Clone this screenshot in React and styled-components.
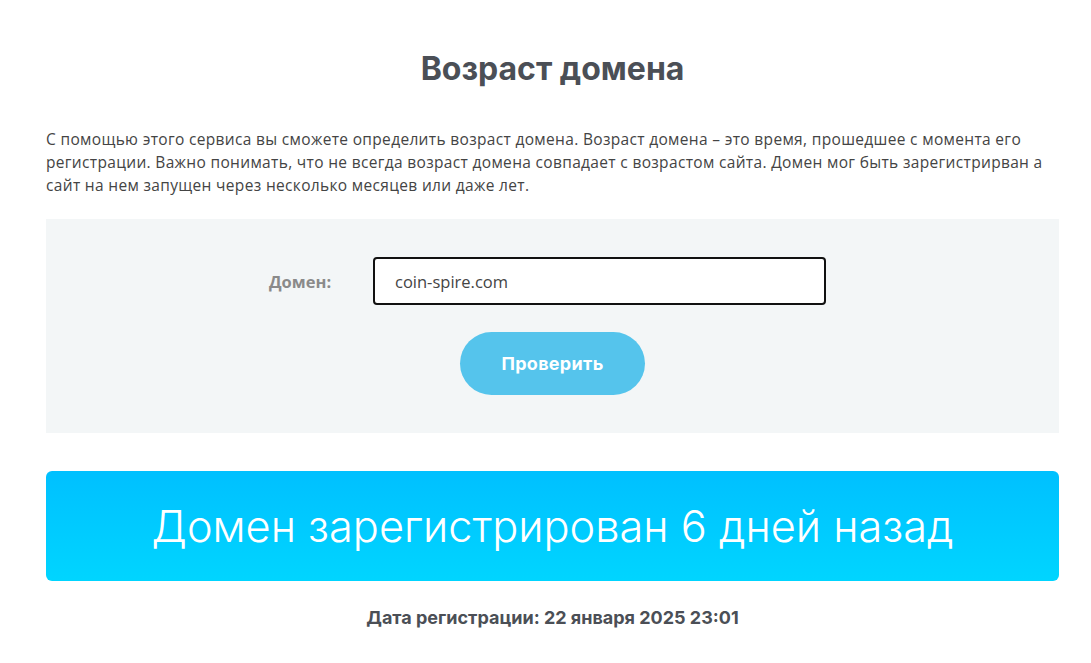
import React from 'react'
import styled, { createGlobalStyle } from 'styled-components'

const GlobalStyle = createGlobalStyle`
  body {
    margin: 0;
    background: #fff;
    font-family: Inter, "Noto Sans", sans-serif;
  }
`;

const Page = styled.div`
  padding: 46px 32px 0 46px;
  color: #4b4f56;
`;

const Title = styled.h1`
  margin: 0;
  text-align: center;
  font-family: Inter, sans-serif;
  font-weight: 700;
  font-size: 32px;
  line-height: 46px;
  color: #4b4f56;
`;

const Intro = styled.p`
  margin: 36px 0 0;
  font-family: "Open Sans", sans-serif;
  font-size: 15.5px;
  letter-spacing: 0.33px;
  line-height: 23px;
  color: #444;
  white-space: nowrap;
`;

const FormBox = styled.div`
  margin-top: 22px;
  background: #f3f6f7;
  height: 214px;
  box-sizing: border-box;
  padding-top: 38px;
  display: flex;
  flex-direction: column;
  align-items: center;
`;

const Row = styled.div`
  display: flex;
  align-items: center;
  gap: 42px;
  margin-right: 10px;
`;

const Label = styled.label`
  font-family: "Open Sans", sans-serif;
  font-weight: 700;
  font-size: 16.5px;
  color: #8a8a8a;
  width: 62px;
  white-space: nowrap;
`;

const Input = styled.input`
  width: 453px;
  height: 48px;
  box-sizing: border-box;
  border: 2px solid #111;
  border-radius: 4px;
  padding: 0 20px;
  font-family: "Open Sans", sans-serif;
  font-size: 16.5px;
  color: #444;
  outline: none;
`;

const Button = styled.button`
  margin-top: 27px;
  width: 185px;
  height: 63px;
  border: none;
  border-radius: 32px;
  background: #55c4ec;
  color: #fff;
  font-family: Inter, sans-serif;
  font-weight: 700;
  font-size: 18px;
  letter-spacing: 0.3px;
  cursor: pointer;
`;

const Result = styled.div`
  margin-top: 38px;
  height: 110px;
  border-radius: 6px;
  background: linear-gradient(180deg, #00c0ff 0%, #00d5ff 100%);
  display: flex;
  align-items: center;
  justify-content: center;
  color: #fff;
  font-family: Inter, sans-serif;
  font-weight: 300;
  font-size: 43.3px;
`;

const DateLine = styled.div`
  margin-top: 26px;
  text-align: center;
  font-family: Inter, sans-serif;
  font-weight: 700;
  font-size: 18px;
  color: #4b4f56;
`;

export default function App() {
  return (
    <>
      <GlobalStyle />
      <Page>
        <Title>Возраст домена</Title>
        <Intro>
          С помощью этого сервиса вы сможете определить возраст домена. Возраст домена – это время, прошедшее с момента его<br />
          регистрации. Важно понимать, что не всегда возраст домена совпадает с возрастом сайта. Домен мог быть зарегистрирван а<br />
          сайт на нем запущен через несколько месяцев или даже лет.
        </Intro>
        <FormBox>
          <Row>
            <Label>Домен:</Label>
            <Input defaultValue="coin-spire.com" />
          </Row>
          <Button>Проверить</Button>
        </FormBox>
        <Result>Домен зарегистрирован 6 дней назад</Result>
        <DateLine>Дата регистрации: 22 января 2025 23:01</DateLine>
      </Page>
    </>
  )
}
